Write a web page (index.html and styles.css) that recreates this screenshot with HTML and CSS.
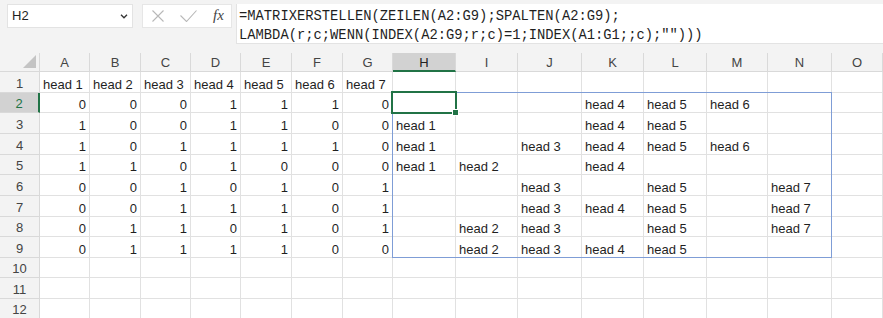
FILE: index.html
```html
<!DOCTYPE html>
<html lang="de">
<head>
    <meta charset="UTF-8">
    <meta name="viewport" content="width=device-width, initial-scale=1.0">
    <title>Mappe1 - Excel</title>
    <link rel="stylesheet" href="styles.css">
</head>
<body>
    <div class="formula-bar">
        <div class="name-box">
            <span>H2</span>
            <svg class="chevron" width="8" height="5" viewBox="0 0 8 5"><path d="M1 0.8l3 3 3-3" fill="none" stroke="#333" stroke-width="1.3"/></svg>
        </div>
        <div class="fx-box">
            <svg class="cancel" width="14" height="12" viewBox="0 0 14 12"><path d="M1.5 0.5l11 11M12.5 0.5l-11 11" stroke="#b8b8b8" stroke-width="1.1" fill="none"/></svg>
            <svg class="enter" width="17" height="12" viewBox="0 0 17 12"><path d="M0.5 5.5l6 6 10-11" stroke="#b8b8b8" stroke-width="1.1" fill="none"/></svg>
            <span class="fx">fx</span>
        </div>
        <div class="formula">=MATRIXERSTELLEN(ZEILEN(A2:G9);SPALTEN(A2:G9);<br>LAMBDA(r;c;WENN(INDEX(A2:G9;r;c)=1;INDEX(A1:G1;;c);"")))</div>
    </div>

    <div class="sheet" id="sheet">
        <div class="spill"></div>
        <div class="active"><span class="handle"></span></div>
    </div>

    <script>
        const letters = ['A','B','C','D','E','F','G','H','I','J','K','L','M','N','O'];
        const heads = ['head 1','head 2','head 3','head 4','head 5','head 6','head 7'];
        const values = [
            [0,0,0,1,1,1,0],
            [1,0,0,1,1,0,0],
            [1,0,1,1,1,1,0],
            [1,1,0,1,0,0,0],
            [0,0,1,0,1,0,1],
            [0,0,1,1,1,0,1],
            [0,1,1,0,1,0,1],
            [0,1,1,1,1,0,0]
        ];
        const sheet = document.getElementById('sheet');

        function cell(cls, text) {
            const div = document.createElement('div');
            div.className = cls;
            div.textContent = text;
            sheet.appendChild(div);
        }

        // header row
        cell('corner', '');
        letters.forEach(l => cell(l === 'H' ? 'col-head selected' : 'col-head', l));

        for (let r = 1; r <= 12; r++) {
            cell(r === 2 ? 'row-head selected' : 'row-head', r);
            for (let c = 0; c < 15; c++) {
                let text = '';
                let cls = 'cell';
                if (r === 1 && c < 7) {
                    text = heads[c];
                } else if (r >= 2 && r <= 9 && c < 7) {
                    text = values[r - 2][c];
                    cls += ' num';
                } else if (r >= 2 && r <= 9 && c >= 7 && c < 14) {
                    text = values[r - 2][c - 7] === 1 ? heads[c - 7] : '';
                }
                cell(cls, text);
            }
        }
    </script>
</body>
</html>
```

FILE: styles.css
```css
body {
    margin: 0;
    background: #f3f3f3;
    font-family: "Liberation Sans", Arial, sans-serif;
    font-size: 13px;
    color: #1f1f1f;
    overflow: hidden;
}

.formula-bar {
    display: flex;
    align-items: flex-start;
    padding: 4px 0 0 7px;
    height: 40px;
    margin-bottom: 9px;
    border-top: 1px solid #e4e4e4;
    margin-top: -1px;
}

.name-box {
    width: 126px;
    height: 24px;
    box-sizing: border-box;
    background: white;
    border: 1px solid #e3e3e3;
    display: flex;
    align-items: center;
    justify-content: space-between;
    padding: 0 4px 1px 4px;
}

.chevron {
    margin-top: 2px;
}

.fx-box {
    margin-left: 9px;
    width: 90px;
    height: 24px;
    box-sizing: border-box;
    background: white;
    border: 1px solid #e6e6e6;
    display: flex;
    align-items: center;
    padding-left: 8px;
}

.cancel {
    margin-right: 15px;
}

.enter {
    margin-right: 16px;
}

.fx {
    font-family: "Liberation Serif", "Times New Roman", serif;
    font-style: italic;
    font-size: 15px;
    color: #444;
    margin-top: -2px;
}

.formula {
    margin-left: 4px;
    flex: 1;
    height: 40px;
    box-sizing: border-box;
    background: white;
    border-left: 1px solid #e3e3e3;
    border-bottom: 1px solid #e3e3e3;
    padding: 3px 0 0 2px;
    font-family: "Liberation Mono", "Courier New", monospace;
    font-size: 13.8px;
    line-height: 19px;
    white-space: nowrap;
}

.sheet {
    position: relative;
    display: grid;
    grid-template-columns: 40px 50px 51px 50px 50px 51px 51px 50px 63px 62px 64px 62px 63px 61px 64px 51px;
    grid-template-rows: 19px 21px 20px 21px 21px 20px 21px 21px 20px 21px 20px 21px 20px;
    background: white;
}

.sheet > div {
    box-sizing: border-box;
    border-right: 1px solid #e1e1e1;
    border-bottom: 1px solid #e1e1e1;
    display: flex;
    align-items: flex-end;
    line-height: 15px;
    padding: 0 3px;
    white-space: nowrap;
    overflow: hidden;
}

.sheet > .corner,
.sheet > .col-head,
.sheet > .row-head {
    background: #f3f3f3;
    color: #444;
    justify-content: center;
    border-color: #d9d9d9;
}

.sheet > .col-head {
    padding-bottom: 1px;
}

.sheet > .row-head {
    padding-bottom: 1px;
}

.corner {
    position: relative;
}

.corner::after {
    content: "";
    position: absolute;
    right: 3px;
    bottom: 3px;
    border-style: solid;
    border-width: 0 0 13px 13px;
    border-color: transparent transparent #c4c4c4 transparent;
}

.sheet > .col-head.selected {
    background: #d2d2d2;
    color: #222;
    border-bottom: 2px solid #217346;
    padding-bottom: 0;
}

.sheet > .row-head.selected {
    background: #d2d2d2;
    color: #217346;
    border-right: 2px solid #217346;
}

.sheet > .num {
    justify-content: flex-end;
}

.sheet > .spill {
    position: absolute;
    grid-column: 9 / 16;
    grid-row: 3 / 11;
    top: -1px;
    left: -1px;
    right: 0;
    bottom: 0;
    border: 1px solid #7f9dd6;
    padding: 0;
}

.sheet > .active {
    position: absolute;
    grid-column: 9 / 10;
    grid-row: 3 / 4;
    top: -2px;
    left: -2px;
    right: -1px;
    bottom: -1px;
    border: 2px solid #217346;
    padding: 0;
    overflow: visible;
}

.handle {
    position: absolute;
    right: -4px;
    bottom: -4px;
    width: 5px;
    height: 5px;
    background: #217346;
    border: 1px solid white;
}
```
